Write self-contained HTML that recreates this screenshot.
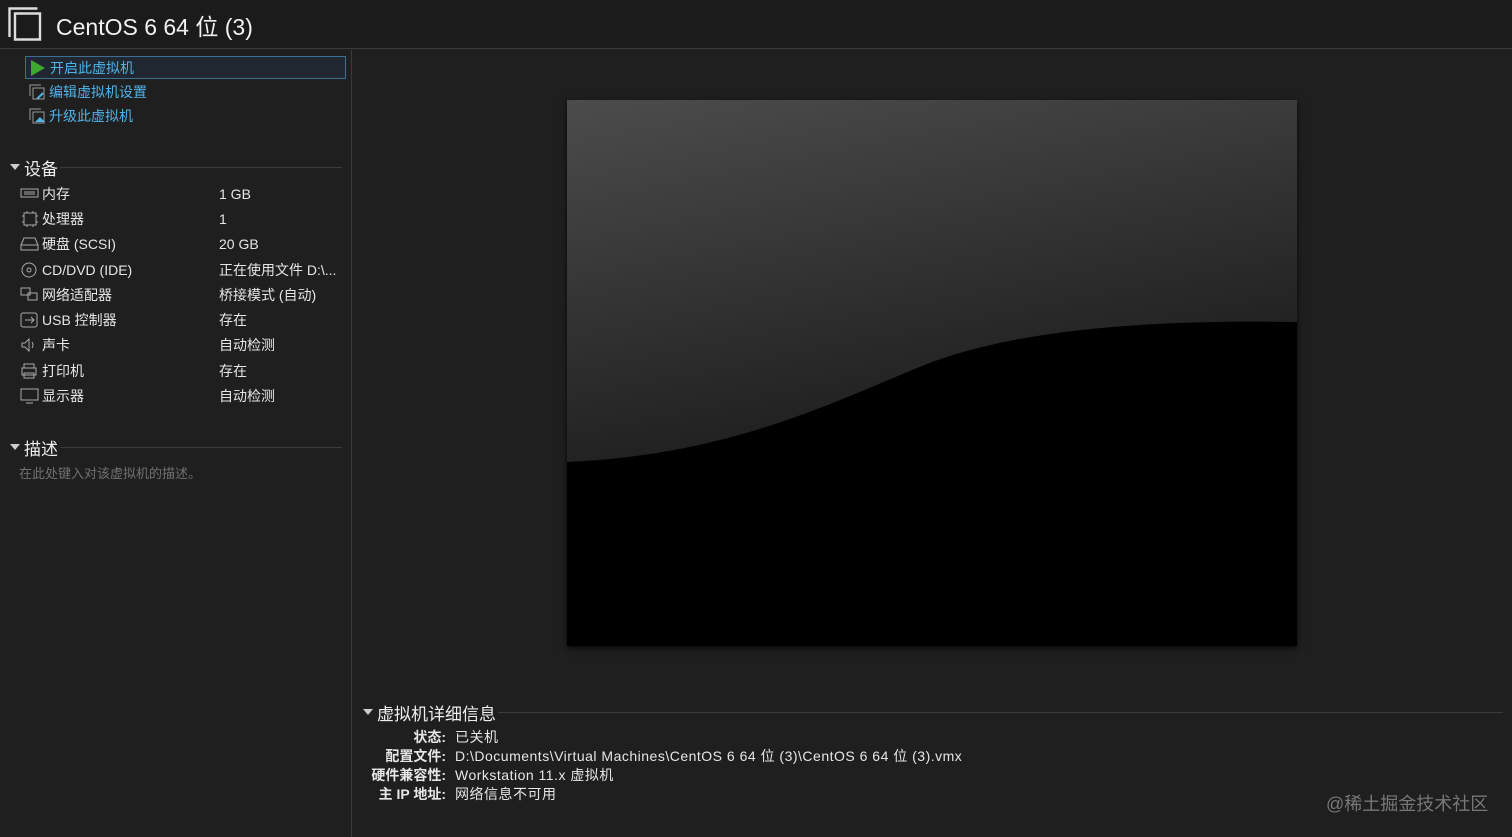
<!DOCTYPE html>
<html><head><meta charset="utf-8"><style>
*{margin:0;padding:0;box-sizing:border-box}
body{width:1512px;height:837px;background:#1f1f1f;font-family:"Liberation Sans","Noto Sans CJK SC",sans-serif;color:#e0e0e0;position:relative;overflow:hidden;font-size:14px}
.hdr{position:absolute;left:0;top:0;width:1512px;height:49px;background:#1b1b1b;border-bottom:1px solid #3a3a3a}
.hdr .t{position:absolute;left:56px;top:8px;font-size:23px;color:#f2f2f2}
.left{position:absolute;left:0;top:50px;width:352px;height:787px;border-right:1px solid #3a3a3a}
.act{position:absolute;left:25px;height:23px;width:321px;color:#4fb3e8;font-size:14px;line-height:22px;padding-left:24px}
.act.sel{border:1px solid #3d6f93;background:#202730}
.sec{position:absolute;left:10px;font-size:17px;color:#eee}
.sec:before{content:"";position:absolute;left:0;top:9px;border-left:5px solid transparent;border-right:5px solid transparent;border-top:6px solid #ccc}
.sec span{margin-left:14px}
.line{position:absolute;height:1px;background:#3a3a3a}
.row{position:absolute;left:20px;font-size:14px;color:#e6e6e6;height:20px;line-height:20px}
.row .n{position:absolute;left:22px;white-space:nowrap}
.row .v{position:absolute;left:199px;white-space:nowrap}
.row svg{position:absolute;left:0;top:2px}
.screen{position:absolute;left:567px;top:100px;width:730px;height:546px;background:#000;box-shadow:0 2px 6px rgba(0,0,0,.8)}
.det{position:absolute;font-size:14px;color:#e6e6e6}
.det .k{position:absolute;width:94px;left:352px;text-align:right;font-weight:bold}
.det .vv{position:absolute;left:455px;white-space:nowrap;letter-spacing:0.5px}
</style></head><body>
<div class="hdr">
<svg style="position:absolute;left:8px;top:7px" width="34" height="34" viewBox="0 0 34 34" fill="none" stroke="#ddd" stroke-width="2.4"><path d="M1.5 30V1.5h28"/><path d="M7 6.5h25v26H7z"/></svg>
<div class="t">CentOS 6 64 位 (3)</div></div>
<div class="left">
<div class="act sel" style="top:6px"><svg style="position:absolute;left:4px;top:3px" width="16" height="16"><path d="M1 0L15 8 1 16z" fill="#3fa82e"/></svg>开启此虚拟机</div>
<div class="act" style="top:31px"><svg style="position:absolute;left:4px;top:3px" width="18" height="18" fill="none" stroke="#999"><path d="M1 12V1h11"/><path d="M4 4h11v11H4z"/><path d="M8 15l6-6" stroke="#4fb3e8" stroke-width="2"/></svg>编辑虚拟机设置</div>
<div class="act" style="top:55px"><svg style="position:absolute;left:4px;top:3px" width="18" height="18" fill="none" stroke="#999"><path d="M1 12V1h11"/><path d="M4 4h11v11H4z"/><path d="M6 14l5-5 5 5z" fill="#4fb3e8" stroke="none"/></svg>升级此虚拟机</div>
<div class="sec" style="top:105px"><span>设备</span></div><div class="line" style="left:60px;top:117px;width:282px"></div>
<div class="row" style="top:134px"><svg width="20" height="16" fill="none" stroke="#aaa"><rect x="1" y="3" width="17" height="8"/><path d="M4 6h11M4 8h11"/></svg><span class="n">内存</span><span class="v">1 GB</span></div>
<div class="row" style="top:159px"><svg width="20" height="16" fill="none" stroke="#aaa"><rect x="4" y="2" width="12" height="12"/><path d="M2 5h2M2 11h2M16 5h2M16 11h2M7 0v2M13 0v2M7 14v2M13 14v2"/></svg><span class="n">处理器</span><span class="v">1</span></div>
<div class="row" style="top:184px"><svg width="20" height="16" fill="none" stroke="#aaa"><path d="M1 9L4 2h11l3 7v5H1z M1 9h17"/></svg><span class="n">硬盘 (SCSI)</span><span class="v">20 GB</span></div>
<div class="row" style="top:210px"><svg width="20" height="16" fill="none" stroke="#aaa"><circle cx="9" cy="8" r="7"/><circle cx="9" cy="8" r="2"/></svg><span class="n">CD/DVD (IDE)</span><span class="v">正在使用文件 D:\...</span></div>
<div class="row" style="top:235px"><svg width="20" height="16" fill="none" stroke="#aaa"><rect x="1" y="1" width="9" height="7"/><rect x="8" y="6" width="9" height="7"/></svg><span class="n">网络适配器</span><span class="v">桥接模式 (自动)</span></div>
<div class="row" style="top:260px"><svg width="20" height="16" fill="none" stroke="#aaa"><rect x="1" y="1" width="16" height="14" rx="2"/><path d="M5 8h9M11 5l3 3-3 3"/></svg><span class="n">USB 控制器</span><span class="v">存在</span></div>
<div class="row" style="top:285px"><svg width="20" height="16" fill="none" stroke="#aaa"><path d="M2 6h3l4-4v12l-4-4H2z M12 5q2 3 0 6"/></svg><span class="n">声卡</span><span class="v">自动检测</span></div>
<div class="row" style="top:311px"><svg width="20" height="16" fill="none" stroke="#aaa"><path d="M4 5V1h10v4M2 5h14v7H2z M4 10h10v5H4z"/></svg><span class="n">打印机</span><span class="v">存在</span></div>
<div class="row" style="top:336px"><svg width="20" height="16" fill="none" stroke="#aaa"><rect x="1" y="1" width="17" height="11"/><path d="M6 15h7"/></svg><span class="n">显示器</span><span class="v">自动检测</span></div>
<div class="sec" style="top:385px"><span>描述</span></div><div class="line" style="left:60px;top:397px;width:282px"></div>
<div style="position:absolute;left:19px;top:413px;font-size:13px;color:#707070">在此处键入对该虚拟机的描述。</div>
</div>
<div class="screen"><svg width="730" height="546" viewBox="0 0 730 546"><defs><linearGradient id="g" x1="0" y1="0" x2="0.4" y2="1"><stop offset="0" stop-color="#4c4c4c"/><stop offset="1" stop-color="#1c1c1c"/></linearGradient></defs><path d="M0 0H730V222C600 220 450 226 350 268C260 305 160 355 0 362Z" fill="url(#g)"/></svg></div>
<div class="sec" style="top:700px;left:363px"><span>虚拟机详细信息</span></div><div class="line" style="left:498px;top:712px;width:1005px"></div>
<div class="det" style="top:727px;left:0"><span class="k">状态:</span><span class="vv">已关机</span></div>
<div class="det" style="top:746px;left:0"><span class="k">配置文件:</span><span class="vv">D:\Documents\Virtual Machines\CentOS 6 64 位 (3)\CentOS 6 64 位 (3).vmx</span></div>
<div class="det" style="top:765px;left:0"><span class="k">硬件兼容性:</span><span class="vv">Workstation 11.x 虚拟机</span></div>
<div class="det" style="top:784px;left:0"><span class="k">主 IP 地址:</span><span class="vv">网络信息不可用</span></div>
<div style="position:absolute;left:1326px;top:790px;font-size:18px;color:#777">@稀土掘金技术社区</div>
</body></html>
